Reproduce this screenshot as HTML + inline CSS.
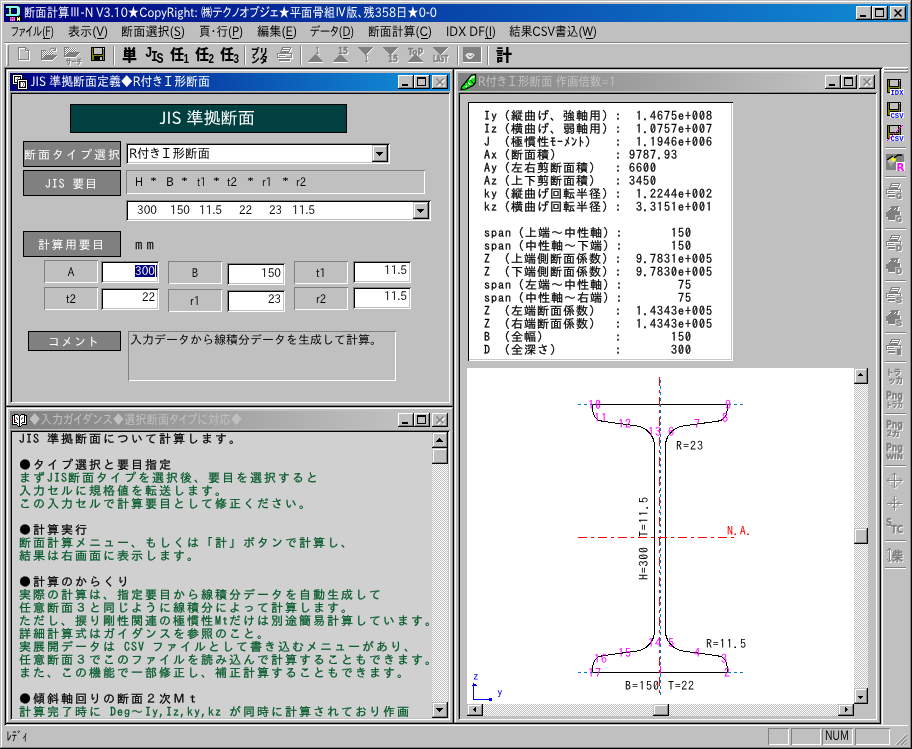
<!DOCTYPE html>
<html lang="ja"><head><meta charset="utf-8"><title>断面計算Ⅲ-N</title>
<style>
html,body{margin:0;padding:0}
body{width:912px;height:749px;background:#c0c0c0;position:relative;overflow:hidden;
 font-family:"IPAPGothic","IPAGothic","Liberation Sans",sans-serif;font-size:12px;color:#000;line-height:1}
div{position:absolute;box-sizing:border-box}
svg{position:absolute;left:0;top:0;overflow:visible}
.frame{background:#c0c0c0;box-shadow:inset -1px -1px 0 #000,inset 1px 1px 0 #c0c0c0,inset -2px -2px 0 #808080,inset 2px 2px 0 #fff}
.sunk{box-shadow:inset 1px 1px 0 #808080,inset -1px -1px 0 #fff,inset 2px 2px 0 #000,inset -2px -2px 0 #c0c0c0}
.btn{background:#c0c0c0;box-shadow:inset -1px -1px 0 #000,inset 1px 1px 0 #fff,inset -2px -2px 0 #808080,inset 2px 2px 0 #c0c0c0}
.sbtn{background:#c0c0c0;box-shadow:inset -1px -1px 0 #000,inset 1px 1px 0 #c0c0c0,inset -2px -2px 0 #808080,inset 2px 2px 0 #fff}
.trk{background:conic-gradient(#fff 25%,#c0c0c0 0 50%,#fff 0 75%,#c0c0c0 0) 0 0/2px 2px}
.ta{background:linear-gradient(to right,#000080,#1084d0 88%)}
.tm{background:linear-gradient(to right,#000080,#1084d0 94%)}
.ti{background:linear-gradient(to right,#808080,#c0c0c0 88%)}
.s1{box-shadow:inset 1px 1px 0 #808080,inset -1px -1px 0 #fff}
.lab{background:#808080;border:1px solid #000;color:#fff}
.mono,svg{will-change:transform}
.mono{-webkit-text-stroke:.25px currentColor}
.mono{font-family:"IPAGothic","Liberation Mono",monospace;font-size:12px;white-space:pre}
.mono div{position:absolute;left:0;height:13px;line-height:13px;white-space:pre}
.gd{letter-spacing:2px}
.tp,.h{letter-spacing:1px}
.g{color:#005828}
text{font-family:"IPAPGothic","IPAGothic","Liberation Sans",sans-serif;font-size:12px}
.m text,text.m{font-family:"IPAGothic","Liberation Mono",monospace;font-size:12px}
</style></head>
<body>
<div class="frame" style="left:0px;top:0px;width:912px;height:749px;"></div>
<div class="tm" style="left:4px;top:4px;width:904px;height:18px;"></div>
<div class="btn" style="left:856px;top:6px;width:16px;height:14px;"></div>
<div style="left:860px;top:15px;width:6px;height:2px;background:#000"></div>
<div class="btn" style="left:872px;top:6px;width:16px;height:14px;"></div>
<div style="left:875px;top:8px;width:9px;height:9px;border:1px solid #000;border-top-width:2px"></div>
<div class="btn" style="left:890px;top:6px;width:16px;height:14px;"></div>
<svg width="16" height="14" style="left:890px;top:6px" shape-rendering="crispEdges"><path d="M4.5 3.5l7 7M11.5 3.5l-7 7" stroke="#000" stroke-width="1.6" fill="none" shape-rendering="auto"/></svg>
<div style="left:43px;top:38px;width:7px;height:1px;background:#000"></div>
<div style="left:97px;top:38px;width:7px;height:1px;background:#000"></div>
<div style="left:174px;top:38px;width:7px;height:1px;background:#000"></div>
<div style="left:232px;top:38px;width:7px;height:1px;background:#000"></div>
<div style="left:286px;top:38px;width:7px;height:1px;background:#000"></div>
<div style="left:343px;top:38px;width:7px;height:1px;background:#000"></div>
<div style="left:421px;top:38px;width:7px;height:1px;background:#000"></div>
<div style="left:485px;top:38px;width:7px;height:1px;background:#000"></div>
<div style="left:586px;top:38px;width:7px;height:1px;background:#000"></div>
<div style="left:4px;top:42px;width:904px;height:1px;background:#808080"></div>
<div style="left:4px;top:43px;width:904px;height:1px;background:#fff"></div>
<div class="sunk" style="left:4px;top:67px;width:879px;height:659px;"></div>
<div class="frame" style="left:6px;top:69px;width:448px;height:338px;"></div>
<div class="ta" style="left:10px;top:73px;width:440px;height:18px;"></div>
<div class="btn" style="left:398px;top:75px;width:16px;height:14px;"></div>
<div style="left:402px;top:84px;width:6px;height:2px;background:#000"></div>
<div class="btn" style="left:414px;top:75px;width:16px;height:14px;"></div>
<div style="left:417px;top:77px;width:9px;height:9px;border:1px solid #000;border-top-width:2px"></div>
<div class="btn" style="left:432px;top:75px;width:16px;height:14px;"></div>
<svg width="16" height="14" style="left:432px;top:75px" shape-rendering="crispEdges"><path d="M5.5 4.5l7 7M12.5 4.5l-7 7" stroke="#fff" stroke-width="1.6" fill="none" shape-rendering="auto"/><path d="M4.5 3.5l7 7M11.5 3.5l-7 7" stroke="#808080" stroke-width="1.6" fill="none" shape-rendering="auto"/></svg>
<div class="sunk" style="left:10px;top:92px;width:440px;height:311px;"></div>
<div style="left:70px;top:104px;width:277px;height:29px;background:#004040;border:1px solid #000"></div>
<div class="frame" style="left:6px;top:407px;width:448px;height:317px;"></div>
<div class="ti" style="left:10px;top:411px;width:440px;height:18px;"></div>
<div class="btn" style="left:398px;top:413px;width:16px;height:14px;"></div>
<div style="left:402px;top:422px;width:6px;height:2px;background:#000"></div>
<div class="btn" style="left:414px;top:413px;width:16px;height:14px;"></div>
<div style="left:417px;top:415px;width:9px;height:9px;border:1px solid #000;border-top-width:2px"></div>
<div class="btn" style="left:432px;top:413px;width:16px;height:14px;"></div>
<svg width="16" height="14" style="left:432px;top:413px" shape-rendering="crispEdges"><path d="M5.5 4.5l7 7M12.5 4.5l-7 7" stroke="#fff" stroke-width="1.6" fill="none" shape-rendering="auto"/><path d="M4.5 3.5l7 7M11.5 3.5l-7 7" stroke="#808080" stroke-width="1.6" fill="none" shape-rendering="auto"/></svg>
<div class="sunk" style="left:10px;top:430px;width:440px;height:290px;"></div>
<div class="frame" style="left:454px;top:69px;width:427px;height:655px;"></div>
<div class="ti" style="left:458px;top:73px;width:419px;height:18px;"></div>
<div class="btn" style="left:825px;top:75px;width:16px;height:14px;"></div>
<div style="left:829px;top:84px;width:6px;height:2px;background:#000"></div>
<div class="btn" style="left:841px;top:75px;width:16px;height:14px;"></div>
<div style="left:844px;top:77px;width:9px;height:9px;border:1px solid #000;border-top-width:2px"></div>
<div class="btn" style="left:859px;top:75px;width:16px;height:14px;"></div>
<svg width="16" height="14" style="left:859px;top:75px" shape-rendering="crispEdges"><path d="M5.5 4.5l7 7M12.5 4.5l-7 7" stroke="#fff" stroke-width="1.6" fill="none" shape-rendering="auto"/><path d="M4.5 3.5l7 7M11.5 3.5l-7 7" stroke="#808080" stroke-width="1.6" fill="none" shape-rendering="auto"/></svg>
<div class="sunk" style="left:458px;top:92px;width:419px;height:628px;"></div>
<div style="left:468px;top:102px;width:265px;height:259px;background:#fff;box-shadow:inset 1px 1px 0 #000,inset -1px -1px 0 #fff,inset -2px -2px 0 #c8c8c8"></div>
<div style="left:467px;top:368px;width:401px;height:348px;background:#fff"></div>
<div class="lab" style="left:23px;top:141px;width:98px;height:26px;"></div>
<div class="lab" style="left:23px;top:170px;width:98px;height:26px;"></div>
<div class="lab" style="left:23px;top:231px;width:98px;height:26px;"></div>
<div class="lab" style="left:28px;top:331px;width:93px;height:20px;"></div>
<div class="sunk" style="left:126px;top:143px;width:264px;height:21px;background:#fff"></div>
<div class="sbtn" style="left:372px;top:145px;width:16px;height:17px;"></div>
<svg width="7" height="4" style="left:376px;top:152px" shape-rendering="crispEdges"><path d="M0 0h7l-3.5 4z" fill="#000"/></svg>
<div class="s1" style="left:126px;top:170px;width:299px;height:24px;"></div>
<div class="sunk" style="left:126px;top:200px;width:305px;height:21px;background:#fff"></div>
<div class="sbtn" style="left:413px;top:202px;width:16px;height:17px;"></div>
<svg width="7" height="4" style="left:417px;top:209px" shape-rendering="crispEdges"><path d="M0 0h7l-3.5 4z" fill="#000"/></svg>
<div class="s1" style="left:44px;top:260px;width:54px;height:23px;"></div>
<div class="sunk" style="left:101px;top:261px;width:58px;height:22px;background:#fff"></div>
<div style="left:135px;top:265px;width:22px;height:12px;background:#000080"></div>
<div style="left:155px;top:265px;width:1px;height:12px;background:#ffff80"></div>
<div class="s1" style="left:168px;top:261px;width:54px;height:23px;"></div>
<div class="sunk" style="left:227px;top:263px;width:58px;height:22px;background:#fff"></div>
<div class="s1" style="left:294px;top:261px;width:54px;height:23px;"></div>
<div class="sunk" style="left:353px;top:261px;width:58px;height:22px;background:#fff"></div>
<div class="s1" style="left:44px;top:287px;width:54px;height:23px;"></div>
<div class="sunk" style="left:101px;top:288px;width:58px;height:22px;background:#fff"></div>
<div class="s1" style="left:168px;top:289px;width:54px;height:23px;"></div>
<div class="sunk" style="left:227px;top:290px;width:58px;height:22px;background:#fff"></div>
<div class="s1" style="left:294px;top:287px;width:54px;height:23px;"></div>
<div class="sunk" style="left:353px;top:287px;width:58px;height:22px;background:#fff"></div>
<div class="s1" style="left:128px;top:331px;width:268px;height:50px;"></div>
<div style="left:12px;top:432px;width:420px;height:286px;background:#d0d0d0;overflow:hidden"><div class="mono gd" style="left:7px;top:0"><div style="top:0px"><span class="h">JIS </span>準拠断面について計算します。</div><div style="top:26px">●タイプ選択と要目指定</div><div class="g" style="top:39px">まず<span class="h">JIS</span>断面タイプを選択後、要目を選択すると</div><div class="g" style="top:52px">入力セルに規格値を転送します。</div><div class="g" style="top:65px">この入力セルで計算要目として修正ください。</div><div style="top:91px">●計算実行</div><div class="g" style="top:104px">断面計算メニュー、もしくは「計」ボタンで計算し、</div><div class="g" style="top:117px">結果は右画面に表示します。</div><div style="top:143px">●計算のからくり</div><div class="g" style="top:156px">実際の計算は、指定要目から線積分データを自動生成して</div><div class="g" style="top:169px">任意断面３と同じように線積分によって計算します。</div><div class="g" style="top:182px">ただし、捩り剛性関連の極慣性<span class="h">Mt</span>だけは別途簡易計算しています。</div><div class="g" style="top:195px">詳細計算式はガイダンスを参照のこと。</div><div class="g" style="top:208px">実展開データは<span class="h"> CSV </span>ファイルとして書き込むメニューがあり、</div><div class="g" style="top:221px">任意断面３でこのファイルを読み込んで計算することもできます。</div><div class="g" style="top:234px">また、この機能で一部修正し、補正計算することもできます。</div><div style="top:260px">●傾斜軸回りの断面２次Ｍｔ</div><div class="g" style="top:273px">計算完了時に<span class="h"> Deg</span>～<span class="h">Iy,Iz,ky,kz </span>が同時に計算されており作画</div></div></div>
<div class="trk" style="left:432px;top:432px;width:16px;height:286px;"></div>
<div class="sbtn" style="left:432px;top:432px;width:16px;height:16px;"></div>
<svg width="7" height="4" style="left:436px;top:438px" shape-rendering="crispEdges"><path d="M0 4h7l-3.5-4z" fill="#000"/></svg>
<div class="sbtn" style="left:432px;top:448px;width:16px;height:16px;"></div>
<div class="sbtn" style="left:432px;top:702px;width:16px;height:16px;"></div>
<svg width="7" height="4" style="left:436px;top:708px" shape-rendering="crispEdges"><path d="M0 0h7l-3.5 4z" fill="#000"/></svg>
<div style="left:468px;top:109px;width:264px;height:250px;"><div class="mono tp" style="left:0;top:0"><div style="top:0px;left:16px"><span class="h">Iy</span>（縦曲げ、強軸用）<span class="h">:</span></div><div style="top:0px;left:168px"><span class="h">1.4675e+008</span></div><div style="top:13px;left:16px"><span class="h">Iz</span>（横曲げ、弱軸用）<span class="h">:</span></div><div style="top:13px;left:168px"><span class="h">1.0757e+007</span></div><div style="top:26px;left:16px"><span class="h">J </span>（極慣性<span class="h">ﾓｰﾒﾝﾄ</span>）</div><div style="top:26px;left:147px"><span class="h">:</span></div><div style="top:26px;left:168px"><span class="h">1.1946e+006</span></div><div style="top:39px;left:16px"><span class="h">Ax</span>（断面積）</div><div style="top:39px;left:147px"><span class="h">:</span></div><div style="top:39px;left:161px"><span class="h">9787.93</span></div><div style="top:52px;left:16px"><span class="h">Ay</span>（左右剪断面積）</div><div style="top:52px;left:147px"><span class="h">:</span></div><div style="top:52px;left:161px"><span class="h">6600</span></div><div style="top:65px;left:16px"><span class="h">Az</span>（上下剪断面積）</div><div style="top:65px;left:147px"><span class="h">:</span></div><div style="top:65px;left:161px"><span class="h">3450</span></div><div style="top:78px;left:16px"><span class="h">ky</span>（縦曲げ回転半径）<span class="h">:</span></div><div style="top:78px;left:168px"><span class="h">1.2244e+002</span></div><div style="top:91px;left:16px"><span class="h">kz</span>（横曲げ回転半径）<span class="h">:</span></div><div style="top:91px;left:168px"><span class="h">3.3151e+001</span></div><div style="top:117px;left:16px"><span class="h">span</span>（上端～中性軸）<span class="h">:</span></div><div style="top:117px;left:203px"><span class="h">150</span></div><div style="top:130px;left:16px"><span class="h">span</span>（中性軸～下端）<span class="h">:</span></div><div style="top:130px;left:203px"><span class="h">150</span></div><div style="top:143px;left:16px"><span class="h">Z </span>（上端側断面係数）<span class="h">:</span></div><div style="top:143px;left:168px"><span class="h">9.7831e+005</span></div><div style="top:156px;left:16px"><span class="h">Z </span>（下端側断面係数）<span class="h">:</span></div><div style="top:156px;left:168px"><span class="h">9.7830e+005</span></div><div style="top:169px;left:16px"><span class="h">span</span>（左端～中性軸）<span class="h">:</span></div><div style="top:169px;left:210px"><span class="h">75</span></div><div style="top:182px;left:16px"><span class="h">span</span>（中性軸～右端）<span class="h">:</span></div><div style="top:182px;left:210px"><span class="h">75</span></div><div style="top:195px;left:16px"><span class="h">Z </span>（左端断面係数）</div><div style="top:195px;left:147px"><span class="h">:</span></div><div style="top:195px;left:168px"><span class="h">1.4343e+005</span></div><div style="top:208px;left:16px"><span class="h">Z </span>（右端断面係数）</div><div style="top:208px;left:147px"><span class="h">:</span></div><div style="top:208px;left:168px"><span class="h">1.4343e+005</span></div><div style="top:221px;left:16px"><span class="h">B </span>（全幅）</div><div style="top:221px;left:147px"><span class="h">:</span></div><div style="top:221px;left:203px"><span class="h">150</span></div><div style="top:234px;left:16px"><span class="h">D </span>（全深さ）</div><div style="top:234px;left:147px"><span class="h">:</span></div><div style="top:234px;left:203px"><span class="h">300</span></div></div></div>
<div class="trk" style="left:854px;top:368px;width:14px;height:336px;"></div>
<div class="sbtn" style="left:854px;top:368px;width:14px;height:16px;"></div>
<svg width="5" height="3" style="left:858px;top:373px" shape-rendering="crispEdges"><path d="M0 3h5l-2.5-3z" fill="#000"/></svg>
<div class="sbtn" style="left:854px;top:528px;width:14px;height:16px;"></div>
<div class="sbtn" style="left:854px;top:688px;width:14px;height:16px;"></div>
<svg width="5" height="3" style="left:858px;top:696px" shape-rendering="crispEdges"><path d="M0 0h5l-2.5 3z" fill="#000"/></svg>
<div class="trk" style="left:467px;top:704px;width:387px;height:12px;"></div>
<div class="sbtn" style="left:467px;top:704px;width:16px;height:12px;"></div>
<svg width="3" height="5" style="left:473px;top:707px" shape-rendering="crispEdges"><path d="M3 0v5l-3-2.5z" fill="#000"/></svg>
<div class="sbtn" style="left:653px;top:704px;width:16px;height:12px;"></div>
<div class="sbtn" style="left:838px;top:704px;width:16px;height:12px;"></div>
<svg width="3" height="5" style="left:845px;top:707px" shape-rendering="crispEdges"><path d="M0 0v5l3-2.5z" fill="#000"/></svg>
<div style="left:854px;top:704px;width:14px;height:12px;background:#c0c0c0"></div>
<div style="left:6px;top:44px;width:3px;height:22px;box-shadow:inset 1px 1px 0 #fff,inset -1px -1px 0 #808080"></div>
<div style="left:113px;top:46px;width:1px;height:19px;background:#808080"></div>
<div style="left:114px;top:46px;width:1px;height:19px;background:#fff"></div>
<div style="left:244px;top:46px;width:1px;height:19px;background:#808080"></div>
<div style="left:245px;top:46px;width:1px;height:19px;background:#fff"></div>
<div style="left:300px;top:46px;width:1px;height:19px;background:#808080"></div>
<div style="left:301px;top:46px;width:1px;height:19px;background:#fff"></div>
<div style="left:457px;top:46px;width:1px;height:19px;background:#808080"></div>
<div style="left:458px;top:46px;width:1px;height:19px;background:#fff"></div>
<div style="left:487px;top:46px;width:1px;height:19px;background:#808080"></div>
<div style="left:488px;top:46px;width:1px;height:19px;background:#fff"></div>
<div style="left:883px;top:67px;width:25px;height:3px;box-shadow:inset 1px 1px 0 #fff,inset -1px -1px 0 #808080"></div>
<div style="left:883px;top:70px;width:25px;height:3px;box-shadow:inset 1px 1px 0 #fff,inset -1px -1px 0 #808080"></div>
<div style="left:885px;top:147px;width:21px;height:1px;background:#808080"></div>
<div style="left:885px;top:148px;width:21px;height:1px;background:#fff"></div>
<div style="left:885px;top:176px;width:21px;height:1px;background:#808080"></div>
<div style="left:885px;top:177px;width:21px;height:1px;background:#fff"></div>
<div style="left:885px;top:228px;width:21px;height:1px;background:#808080"></div>
<div style="left:885px;top:229px;width:21px;height:1px;background:#fff"></div>
<div style="left:885px;top:280px;width:21px;height:1px;background:#808080"></div>
<div style="left:885px;top:281px;width:21px;height:1px;background:#fff"></div>
<div style="left:885px;top:332px;width:21px;height:1px;background:#808080"></div>
<div style="left:885px;top:333px;width:21px;height:1px;background:#fff"></div>
<div style="left:885px;top:361px;width:21px;height:1px;background:#808080"></div>
<div style="left:885px;top:362px;width:21px;height:1px;background:#fff"></div>
<div style="left:885px;top:413px;width:21px;height:1px;background:#808080"></div>
<div style="left:885px;top:414px;width:21px;height:1px;background:#fff"></div>
<div style="left:885px;top:465px;width:21px;height:1px;background:#808080"></div>
<div style="left:885px;top:466px;width:21px;height:1px;background:#fff"></div>
<div style="left:885px;top:540px;width:21px;height:1px;background:#808080"></div>
<div style="left:885px;top:541px;width:21px;height:1px;background:#fff"></div>
<div style="left:885px;top:567px;width:21px;height:1px;background:#808080"></div>
<div style="left:885px;top:568px;width:21px;height:1px;background:#fff"></div>
<div style="left:883px;top:725px;width:25px;height:1px;background:#fff"></div>
<div class="s1" style="left:768px;top:728px;width:21px;height:17px;"></div>
<div class="s1" style="left:791px;top:728px;width:30px;height:17px;"></div>
<div class="s1" style="left:822px;top:728px;width:31px;height:17px;"></div>
<div class="s1" style="left:855px;top:728px;width:35px;height:17px;"></div>
<svg width="912" height="749" style="pointer-events:none">
<defs><pattern id="dz" width="2" height="2" patternUnits="userSpaceOnUse"><rect width="2" height="2" fill="#fff"/><rect width="1" height="1" fill="#808080"/><rect x="1" y="1" width="1" height="1" fill="#808080"/></pattern></defs>
<g transform="translate(18 47)" shape-rendering="crispEdges"><path d="M0.5 0.5H7.5L10.5 3.5V12.5H0.5ZM7.5 0.5V3.5H10.5" fill="none" stroke="#fff" stroke-width="1" transform="translate(1 1)"/><path d="M0.5 0.5H7.5L10.5 3.5V12.5H0.5ZM7.5 0.5V3.5H10.5" fill="none" stroke="#808080" stroke-width="1"/></g>
<g transform="translate(41 47)" shape-rendering="crispEdges"><path d="M1 13.5H11.5L15.5 9.5" fill="none" stroke="#fff"/><rect x="0" y="4" width="12" height="9" fill="url(#dz)"/><path d="M0 3h5v1h-5z" fill="#808080"/><path d="M1 13L5 8H16L12 13Z" fill="#808080"/><path d="M0.5 3.5V12.5" stroke="#808080" fill="none"/><path shape-rendering="auto" d="M8.5 3.5C9 0.5 13 0.5 14.5 3.5M14.5 0.5V3.5H11.5" fill="none" stroke="#fff" stroke-width="1" transform="translate(1 1)"/><path shape-rendering="auto" d="M8.5 3.5C9 0.5 13 0.5 14.5 3.5M14.5 0.5V3.5H11.5" fill="none" stroke="#808080" stroke-width="1"/></g>
<g transform="translate(64 44)" shape-rendering="crispEdges"><path d="M1 13.5H11.5L15.5 9.5" fill="none" stroke="#fff"/><rect x="0" y="4" width="12" height="9" fill="url(#dz)"/><path d="M0 3h5v1h-5z" fill="#808080"/><path d="M1 13L5 8H16L12 13Z" fill="#808080"/><path d="M0.5 3.5V12.5" stroke="#808080" fill="none"/><text x="3" y="21" font-weight="bold" style="font-family:'Noto Sans CJK JP','IPAGothic',sans-serif;font-size:7px" fill="#fff" textLength="16" lengthAdjust="spacingAndGlyphs">サーチ</text><text x="2" y="20" font-weight="bold" style="font-family:'Noto Sans CJK JP','IPAGothic',sans-serif;font-size:7px" fill="#808080" textLength="16" lengthAdjust="spacingAndGlyphs" stroke="#808080" stroke-width=".35">サーチ</text></g>
<g transform="translate(91 47)" shape-rendering="crispEdges"><rect x="0" y="0" width="14" height="14" fill="#000"/><rect x="1" y="1" width="12" height="12" fill="#808000"/><rect x="3" y="1" width="8" height="6" fill="#c0c0c0"/><path d="M2.5 1V7.5H11.5V1" fill="none" stroke="#000"/><rect x="3" y="9" width="9" height="5" fill="#000"/><rect x="9" y="10" width="2" height="3" fill="#c0c0c0"/><rect x="12" y="1" width="1" height="1" fill="#fff"/></g>
<g transform="translate(0 0)"><text x="122" y="60.5" font-weight="900" style="font-family:'Noto Sans CJK JP','IPAGothic',sans-serif;font-size:16px" fill="#000" textLength="15" lengthAdjust="spacingAndGlyphs">単</text></g>
<g transform="translate(0 0)"><text x="145" y="56.5" font-weight="bold" style="font-family:'Liberation Mono',monospace;font-size:15px" fill="#000" textLength="7.5" lengthAdjust="spacingAndGlyphs">J</text><text x="151" y="61" font-weight="bold" style="font-family:'Liberation Mono',monospace;font-size:14px" fill="#000" textLength="7" lengthAdjust="spacingAndGlyphs">I</text><text x="156.5" y="62.5" font-weight="bold" style="font-family:'Liberation Mono',monospace;font-size:15px" fill="#000" textLength="7" lengthAdjust="spacingAndGlyphs">S</text></g>
<g transform="translate(0 0)"><text x="170" y="59" font-weight="900" style="font-family:'Noto Sans CJK JP','IPAGothic',sans-serif;font-size:14px" fill="#000" textLength="14" lengthAdjust="spacingAndGlyphs">任</text><text x="183.5" y="63" font-weight="bold" style="font-family:'Liberation Sans',sans-serif;font-size:12px" fill="#000" textLength="5.5" lengthAdjust="spacingAndGlyphs">1</text></g>
<g transform="translate(0 0)"><text x="195" y="59" font-weight="900" style="font-family:'Noto Sans CJK JP','IPAGothic',sans-serif;font-size:14px" fill="#000" textLength="14" lengthAdjust="spacingAndGlyphs">任</text><text x="208.5" y="63" font-weight="bold" style="font-family:'Liberation Sans',sans-serif;font-size:12px" fill="#000" textLength="5.5" lengthAdjust="spacingAndGlyphs">2</text></g>
<g transform="translate(0 0)"><text x="220" y="59" font-weight="900" style="font-family:'Noto Sans CJK JP','IPAGothic',sans-serif;font-size:14px" fill="#000" textLength="14" lengthAdjust="spacingAndGlyphs">任</text><text x="233.5" y="63" font-weight="bold" style="font-family:'Liberation Sans',sans-serif;font-size:12px" fill="#000" textLength="5.5" lengthAdjust="spacingAndGlyphs">3</text></g>
<g transform="translate(0 0)"><text x="251" y="54.5" font-weight="900" style="font-family:'Noto Sans CJK JP','IPAGothic',sans-serif;font-size:9px" fill="#000" textLength="17" lengthAdjust="spacingAndGlyphs">プリ</text><text x="251" y="62.5" font-weight="900" style="font-family:'Noto Sans CJK JP','IPAGothic',sans-serif;font-size:9px" fill="#000" textLength="17" lengthAdjust="spacingAndGlyphs">ンタ</text></g>
<g transform="translate(277 47)" shape-rendering="crispEdges"><path d="M5.5 0.5H13.5L11.5 5.5H3.5ZM5 2.5H12M4.5 4H11M0.5 6.5H14.5V10.5H0.5ZM2 8.5H8M2.5 11.5V13.5H12.5V11.5M3 12.5H12" fill="none" stroke="#fff" stroke-width="1" transform="translate(1 1)"/><path d="M5.5 0.5H13.5L11.5 5.5H3.5ZM5 2.5H12M4.5 4H11M0.5 6.5H14.5V10.5H0.5ZM2 8.5H8M2.5 11.5V13.5H12.5V11.5M3 12.5H12" fill="none" stroke="#808080" stroke-width="1"/></g>
<g transform="translate(0 0)" shape-rendering="crispEdges"><path d="M308 62H323" stroke="#fff" fill="none" transform="translate(0 0.5)"/><path d="M308 62L315.5 54L323 62Z" fill="#808080"/><text x="317" y="55" font-weight="bold" style="font-family:'DejaVu Sans','Liberation Sans',sans-serif;font-size:9px" fill="#fff" textLength="3" lengthAdjust="spacingAndGlyphs">1</text><text x="316" y="54" font-weight="bold" style="font-family:'DejaVu Sans','Liberation Sans',sans-serif;font-size:9px" fill="#808080" textLength="3" lengthAdjust="spacingAndGlyphs" stroke="#808080" stroke-width=".35">1</text></g>
<g transform="translate(0 0)" shape-rendering="crispEdges"><path d="M333 62H348" stroke="#fff" fill="none" transform="translate(0 0.5)"/><path d="M333 62L340.5 54L348 62Z" fill="#808080"/><text x="339" y="55" font-weight="bold" style="font-family:'DejaVu Sans','Liberation Sans',sans-serif;font-size:9px" fill="#fff" textLength="10" lengthAdjust="spacingAndGlyphs">15</text><text x="338" y="54" font-weight="bold" style="font-family:'DejaVu Sans','Liberation Sans',sans-serif;font-size:9px" fill="#808080" textLength="10" lengthAdjust="spacingAndGlyphs" stroke="#808080" stroke-width=".35">15</text></g>
<g transform="translate(0 0)" shape-rendering="crispEdges"><path d="M366.5 55L373.5 47.5" stroke="#fff" fill="none" shape-rendering="auto"/><path d="M358 47H373L365.5 55Z" fill="#808080"/><text x="366" y="63" font-weight="bold" style="font-family:'DejaVu Sans','Liberation Sans',sans-serif;font-size:9px" fill="#fff" textLength="3" lengthAdjust="spacingAndGlyphs">1</text><text x="365" y="62" font-weight="bold" style="font-family:'DejaVu Sans','Liberation Sans',sans-serif;font-size:9px" fill="#808080" textLength="3" lengthAdjust="spacingAndGlyphs" stroke="#808080" stroke-width=".35">1</text></g>
<g transform="translate(0 0)" shape-rendering="crispEdges"><path d="M391.5 55L398.5 47.5" stroke="#fff" fill="none" shape-rendering="auto"/><path d="M383 47H398L390.5 55Z" fill="#808080"/><text x="389" y="63" font-weight="bold" style="font-family:'DejaVu Sans','Liberation Sans',sans-serif;font-size:9px" fill="#fff" textLength="10" lengthAdjust="spacingAndGlyphs">15</text><text x="388" y="62" font-weight="bold" style="font-family:'DejaVu Sans','Liberation Sans',sans-serif;font-size:9px" fill="#808080" textLength="10" lengthAdjust="spacingAndGlyphs" stroke="#808080" stroke-width=".35">15</text></g>
<g transform="translate(0 0)" shape-rendering="crispEdges"><text x="409" y="56" font-weight="bold" style="font-family:'DejaVu Sans','Liberation Sans',sans-serif;font-size:9px" fill="#fff" textLength="15" lengthAdjust="spacingAndGlyphs">ToP</text><text x="408" y="55" font-weight="bold" style="font-family:'DejaVu Sans','Liberation Sans',sans-serif;font-size:9px" fill="#808080" textLength="15" lengthAdjust="spacingAndGlyphs" stroke="#808080" stroke-width=".35">ToP</text><path d="M408 62H423" stroke="#fff" fill="none" transform="translate(0 0.5)"/><path d="M408 62L415.5 54L423 62Z" fill="#808080"/></g>
<g transform="translate(0 0)" shape-rendering="crispEdges"><path d="M441.5 55L448.5 47.5" stroke="#fff" fill="none" shape-rendering="auto"/><path d="M433 47H448L440.5 55Z" fill="#808080"/><text x="434" y="63" font-weight="bold" style="font-family:'DejaVu Sans','Liberation Sans',sans-serif;font-size:8px" fill="#fff" textLength="15" lengthAdjust="spacingAndGlyphs">LAST</text><text x="433" y="62" font-weight="bold" style="font-family:'DejaVu Sans','Liberation Sans',sans-serif;font-size:8px" fill="#808080" textLength="15" lengthAdjust="spacingAndGlyphs" stroke="#808080" stroke-width=".35">LAST</text></g>
<g transform="translate(463 47)" shape-rendering="crispEdges"><rect x="0" y="0" width="19" height="16" fill="#fff"/><rect x="0" y="0" width="18" height="15" fill="#808080"/><path d="M2 8L5 6H9L12 8L8 12H5Z" fill="#e0e0e0" shape-rendering="auto"/><path d="M5 8L7 10L10 8" stroke="#808080" fill="none" shape-rendering="auto"/></g>
<g transform="translate(0 0)"><text x="496" y="60.5" font-weight="900" style="font-family:'Noto Sans CJK JP','IPAGothic',sans-serif;font-size:16px" fill="#000" textLength="16" lengthAdjust="spacingAndGlyphs">計</text></g>
<g transform="translate(887 79)" shape-rendering="crispEdges"><rect x="0" y="0" width="14" height="14" fill="#000"/><rect x="1" y="1" width="12" height="12" fill="#808000"/><rect x="3" y="1" width="8" height="6" fill="#c0c0c0"/><path d="M2.5 1V7.5H11.5V1" fill="none" stroke="#000"/><rect x="3" y="9" width="9" height="5" fill="#000"/><rect x="9" y="10" width="2" height="3" fill="#c0c0c0"/><rect x="12" y="1" width="1" height="1" fill="#fff"/><rect x="3" y="10" width="14" height="6" fill="#fff"/><text x="3.5" y="16" font-weight="bold" style="font-family:'Liberation Mono',monospace;font-size:8px" fill="#00f" textLength="13" lengthAdjust="spacingAndGlyphs">IDX</text></g>
<g transform="translate(887 102)" shape-rendering="crispEdges"><rect x="0" y="0" width="14" height="14" fill="#000"/><rect x="1" y="1" width="12" height="12" fill="#808000"/><rect x="3" y="1" width="8" height="6" fill="#c0c0c0"/><path d="M2.5 1V7.5H11.5V1" fill="none" stroke="#000"/><rect x="3" y="9" width="9" height="5" fill="#000"/><rect x="9" y="10" width="2" height="3" fill="#c0c0c0"/><rect x="12" y="1" width="1" height="1" fill="#fff"/><rect x="3" y="10" width="14" height="6" fill="#fff"/><text x="3.5" y="16" font-weight="bold" style="font-family:'Liberation Mono',monospace;font-size:8px" fill="#00f" textLength="13" lengthAdjust="spacingAndGlyphs">CSV</text></g>
<g transform="translate(887 125)" shape-rendering="crispEdges"><rect x="0" y="0" width="14" height="14" fill="#000"/><rect x="1" y="1" width="12" height="12" fill="#808000"/><rect x="3" y="1" width="8" height="6" fill="#c0c0c0"/><path d="M2.5 1V7.5H11.5V1" fill="none" stroke="#000"/><rect x="3" y="9" width="9" height="5" fill="#000"/><rect x="9" y="10" width="2" height="3" fill="#c0c0c0"/><rect x="12" y="1" width="1" height="1" fill="#fff"/><rect x="3" y="10" width="14" height="6" fill="#fff"/><text x="3.5" y="16" font-weight="bold" style="font-family:'Liberation Mono',monospace;font-size:8px" fill="#00f" textLength="13" lengthAdjust="spacingAndGlyphs">CSV</text><path d="M0 16L16 0" stroke="#f0f" fill="none" shape-rendering="auto"/></g>
<g transform="translate(886 154)" shape-rendering="crispEdges"><rect x="0" y="0" width="18" height="16" fill="#808080"/><path d="M1 6L7 2L10 7L4 11Z" fill="#c0c0c0" shape-rendering="auto"/><path d="M2 8L5 13L8 9Z" fill="#a0a0a0" shape-rendering="auto"/><path d="M5 4L9 3L10 6L7 8Z" fill="#ff0" shape-rendering="auto"/><path d="M1 6L7 2M8 4L12 1H16" stroke="#000" stroke-width="1.3" fill="none" shape-rendering="auto"/><rect x="10" y="8" width="9" height="9" fill="#fff"/><text x="10.5" y="16.5" font-weight="bold" style="font-family:'DejaVu Sans','Liberation Sans',sans-serif;font-size:10px" fill="#f0f" textLength="8" lengthAdjust="spacingAndGlyphs">R</text></g>
<g transform="translate(886 183)" shape-rendering="crispEdges"><path d="M5.5 0.5H13.5L11.5 5.5H3.5ZM5 2.5H12M4.5 4H11M0.5 6.5H14.5V10.5H0.5ZM2 8.5H8M2.5 11.5V13.5H12.5V11.5M3 12.5H12" fill="none" stroke="#fff" stroke-width="1" transform="translate(1 1)"/><path d="M5.5 0.5H13.5L11.5 5.5H3.5ZM5 2.5H12M4.5 4H11M0.5 6.5H14.5V10.5H0.5ZM2 8.5H8M2.5 11.5V13.5H12.5V11.5M3 12.5H12" fill="none" stroke="#808080" stroke-width="1"/><rect x="9" y="9" width="8" height="8" fill="#c0c0c0"/><text x="11" y="17" font-weight="bold" style="font-family:'Liberation Sans','Noto Sans CJK JP',sans-serif;font-size:9px" fill="#fff" textLength="6" lengthAdjust="spacingAndGlyphs">G</text><text x="10" y="16" font-weight="bold" style="font-family:'Liberation Sans','Noto Sans CJK JP',sans-serif;font-size:9px" fill="#808080" textLength="6" lengthAdjust="spacingAndGlyphs" stroke="#808080" stroke-width=".35">G</text></g>
<g transform="translate(886 206)" shape-rendering="crispEdges"><path d="M5 0H13L11 5H14V11H12V14H2V11H0V6L3 5Z" fill="#fff" transform="translate(1 1)"/><path d="M5 0H13L11 5H14V11H12V14H2V11H0V6L3 5Z" fill="#808080"/><rect x="4" y="2" width="1" height="1" fill="#fff"/><rect x="9" y="2" width="1" height="1" fill="#fff"/><rect x="3" y="3" width="1" height="1" fill="#fff"/><rect x="8" y="3" width="1" height="1" fill="#fff"/><rect x="9" y="9" width="8" height="8" fill="#c0c0c0"/><text x="11" y="17" font-weight="bold" style="font-family:'Liberation Sans','Noto Sans CJK JP',sans-serif;font-size:9px" fill="#fff" textLength="6" lengthAdjust="spacingAndGlyphs">G</text><text x="10" y="16" font-weight="bold" style="font-family:'Liberation Sans','Noto Sans CJK JP',sans-serif;font-size:9px" fill="#808080" textLength="6" lengthAdjust="spacingAndGlyphs" stroke="#808080" stroke-width=".35">G</text></g>
<g transform="translate(886 235)" shape-rendering="crispEdges"><path d="M5.5 0.5H13.5L11.5 5.5H3.5ZM5 2.5H12M4.5 4H11M0.5 6.5H14.5V10.5H0.5ZM2 8.5H8M2.5 11.5V13.5H12.5V11.5M3 12.5H12" fill="none" stroke="#fff" stroke-width="1" transform="translate(1 1)"/><path d="M5.5 0.5H13.5L11.5 5.5H3.5ZM5 2.5H12M4.5 4H11M0.5 6.5H14.5V10.5H0.5ZM2 8.5H8M2.5 11.5V13.5H12.5V11.5M3 12.5H12" fill="none" stroke="#808080" stroke-width="1"/><rect x="9" y="9" width="8" height="8" fill="#c0c0c0"/><text x="11" y="17" font-weight="bold" style="font-family:'Liberation Sans','Noto Sans CJK JP',sans-serif;font-size:9px" fill="#fff" textLength="6" lengthAdjust="spacingAndGlyphs">D</text><text x="10" y="16" font-weight="bold" style="font-family:'Liberation Sans','Noto Sans CJK JP',sans-serif;font-size:9px" fill="#808080" textLength="6" lengthAdjust="spacingAndGlyphs" stroke="#808080" stroke-width=".35">D</text></g>
<g transform="translate(886 258)" shape-rendering="crispEdges"><path d="M5 0H13L11 5H14V11H12V14H2V11H0V6L3 5Z" fill="#fff" transform="translate(1 1)"/><path d="M5 0H13L11 5H14V11H12V14H2V11H0V6L3 5Z" fill="#808080"/><rect x="4" y="2" width="1" height="1" fill="#fff"/><rect x="9" y="2" width="1" height="1" fill="#fff"/><rect x="3" y="3" width="1" height="1" fill="#fff"/><rect x="8" y="3" width="1" height="1" fill="#fff"/><rect x="9" y="9" width="8" height="8" fill="#c0c0c0"/><text x="11" y="17" font-weight="bold" style="font-family:'Liberation Sans','Noto Sans CJK JP',sans-serif;font-size:9px" fill="#fff" textLength="6" lengthAdjust="spacingAndGlyphs">D</text><text x="10" y="16" font-weight="bold" style="font-family:'Liberation Sans','Noto Sans CJK JP',sans-serif;font-size:9px" fill="#808080" textLength="6" lengthAdjust="spacingAndGlyphs" stroke="#808080" stroke-width=".35">D</text></g>
<g transform="translate(886 287)" shape-rendering="crispEdges"><path d="M5.5 0.5H13.5L11.5 5.5H3.5ZM5 2.5H12M4.5 4H11M0.5 6.5H14.5V10.5H0.5ZM2 8.5H8M2.5 11.5V13.5H12.5V11.5M3 12.5H12" fill="none" stroke="#fff" stroke-width="1" transform="translate(1 1)"/><path d="M5.5 0.5H13.5L11.5 5.5H3.5ZM5 2.5H12M4.5 4H11M0.5 6.5H14.5V10.5H0.5ZM2 8.5H8M2.5 11.5V13.5H12.5V11.5M3 12.5H12" fill="none" stroke="#808080" stroke-width="1"/><rect x="9" y="9" width="8" height="8" fill="#c0c0c0"/><text x="11" y="17" font-weight="bold" style="font-family:'Liberation Sans','Noto Sans CJK JP',sans-serif;font-size:9px" fill="#fff" textLength="6" lengthAdjust="spacingAndGlyphs">S</text><text x="10" y="16" font-weight="bold" style="font-family:'Liberation Sans','Noto Sans CJK JP',sans-serif;font-size:9px" fill="#808080" textLength="6" lengthAdjust="spacingAndGlyphs" stroke="#808080" stroke-width=".35">S</text></g>
<g transform="translate(886 310)" shape-rendering="crispEdges"><path d="M5 0H13L11 5H14V11H12V14H2V11H0V6L3 5Z" fill="#fff" transform="translate(1 1)"/><path d="M5 0H13L11 5H14V11H12V14H2V11H0V6L3 5Z" fill="#808080"/><rect x="4" y="2" width="1" height="1" fill="#fff"/><rect x="9" y="2" width="1" height="1" fill="#fff"/><rect x="3" y="3" width="1" height="1" fill="#fff"/><rect x="8" y="3" width="1" height="1" fill="#fff"/><rect x="9" y="9" width="8" height="8" fill="#c0c0c0"/><text x="11" y="17" font-weight="bold" style="font-family:'Liberation Sans','Noto Sans CJK JP',sans-serif;font-size:9px" fill="#fff" textLength="6" lengthAdjust="spacingAndGlyphs">S</text><text x="10" y="16" font-weight="bold" style="font-family:'Liberation Sans','Noto Sans CJK JP',sans-serif;font-size:9px" fill="#808080" textLength="6" lengthAdjust="spacingAndGlyphs" stroke="#808080" stroke-width=".35">S</text></g>
<g transform="translate(886 339)" shape-rendering="crispEdges"><path d="M5.5 0.5H13.5L11.5 5.5H3.5ZM5 2.5H12M4.5 4H11M0.5 6.5H14.5V10.5H0.5ZM2 8.5H8M2.5 11.5V13.5H12.5V11.5M3 12.5H12" fill="none" stroke="#fff" stroke-width="1" transform="translate(1 1)"/><path d="M5.5 0.5H13.5L11.5 5.5H3.5ZM5 2.5H12M4.5 4H11M0.5 6.5H14.5V10.5H0.5ZM2 8.5H8M2.5 11.5V13.5H12.5V11.5M3 12.5H12" fill="none" stroke="#808080" stroke-width="1"/><rect x="9" y="9" width="8" height="8" fill="#c0c0c0"/><text x="11" y="17" font-weight="bold" style="font-family:'Liberation Sans','Noto Sans CJK JP',sans-serif;font-size:9px" fill="#fff" textLength="6" lengthAdjust="spacingAndGlyphs">I</text><text x="10" y="16" font-weight="bold" style="font-family:'Liberation Sans','Noto Sans CJK JP',sans-serif;font-size:9px" fill="#808080" textLength="6" lengthAdjust="spacingAndGlyphs" stroke="#808080" stroke-width=".35">I</text></g>
<g transform="translate(886 368)" shape-rendering="crispEdges"><text x="1" y="8" font-weight="bold" style="font-family:'Noto Sans CJK JP','IPAGothic',sans-serif;font-size:8px" fill="#fff" textLength="15" lengthAdjust="spacingAndGlyphs">トラ</text><text x="0" y="7" font-weight="bold" style="font-family:'Noto Sans CJK JP','IPAGothic',sans-serif;font-size:8px" fill="#808080" textLength="15" lengthAdjust="spacingAndGlyphs" stroke="#808080" stroke-width=".35">トラ</text><text x="3" y="16" font-weight="bold" style="font-family:'Noto Sans CJK JP','IPAGothic',sans-serif;font-size:8px" fill="#fff" textLength="15" lengthAdjust="spacingAndGlyphs">ッカ</text><text x="2" y="15" font-weight="bold" style="font-family:'Noto Sans CJK JP','IPAGothic',sans-serif;font-size:8px" fill="#808080" textLength="15" lengthAdjust="spacingAndGlyphs" stroke="#808080" stroke-width=".35">ッカ</text></g>
<g transform="translate(886 391)" shape-rendering="crispEdges"><text x="1" y="9" font-weight="bold" style="font-family:'DejaVu Sans','Liberation Sans',sans-serif;font-size:10px" fill="#fff" textLength="17" lengthAdjust="spacingAndGlyphs">Png</text><text x="0" y="8" font-weight="bold" style="font-family:'DejaVu Sans','Liberation Sans',sans-serif;font-size:10px" fill="#808080" textLength="17" lengthAdjust="spacingAndGlyphs" stroke="#808080" stroke-width=".35">Png</text><text x="1" y="17" font-weight="bold" style="font-family:'Noto Sans CJK JP','IPAGothic',sans-serif;font-size:7px" fill="#fff" textLength="17" lengthAdjust="spacingAndGlyphs">トラカ</text><text x="0" y="16" font-weight="bold" style="font-family:'Noto Sans CJK JP','IPAGothic',sans-serif;font-size:7px" fill="#808080" textLength="17" lengthAdjust="spacingAndGlyphs" stroke="#808080" stroke-width=".35">トラカ</text></g>
<g transform="translate(886 420)" shape-rendering="crispEdges"><text x="1" y="9" font-weight="bold" style="font-family:'DejaVu Sans','Liberation Sans',sans-serif;font-size:10px" fill="#fff" textLength="17" lengthAdjust="spacingAndGlyphs">Png</text><text x="0" y="8" font-weight="bold" style="font-family:'DejaVu Sans','Liberation Sans',sans-serif;font-size:10px" fill="#808080" textLength="17" lengthAdjust="spacingAndGlyphs" stroke="#808080" stroke-width=".35">Png</text><text x="2" y="17" font-weight="bold" style="font-family:'Noto Sans CJK JP','IPAGothic',sans-serif;font-size:7px" fill="#fff" textLength="13" lengthAdjust="spacingAndGlyphs">2カ</text><text x="1" y="16" font-weight="bold" style="font-family:'Noto Sans CJK JP','IPAGothic',sans-serif;font-size:7px" fill="#808080" textLength="13" lengthAdjust="spacingAndGlyphs" stroke="#808080" stroke-width=".35">2カ</text></g>
<g transform="translate(886 443)" shape-rendering="crispEdges"><text x="1" y="9" font-weight="bold" style="font-family:'DejaVu Sans','Liberation Sans',sans-serif;font-size:10px" fill="#fff" textLength="17" lengthAdjust="spacingAndGlyphs">Png</text><text x="0" y="8" font-weight="bold" style="font-family:'DejaVu Sans','Liberation Sans',sans-serif;font-size:10px" fill="#808080" textLength="17" lengthAdjust="spacingAndGlyphs" stroke="#808080" stroke-width=".35">Png</text><text x="1" y="17" font-weight="bold" style="font-family:'DejaVu Sans','Liberation Sans',sans-serif;font-size:7px" fill="#fff" textLength="17" lengthAdjust="spacingAndGlyphs">WIN</text><text x="0" y="16" font-weight="bold" style="font-family:'DejaVu Sans','Liberation Sans',sans-serif;font-size:7px" fill="#808080" textLength="17" lengthAdjust="spacingAndGlyphs" stroke="#808080" stroke-width=".35">WIN</text></g>
<g transform="translate(886 472)" shape-rendering="crispEdges"><path shape-rendering="auto" d="M8.5 1V15M1 8.5H16M6 3.5L8.5 1L11 3.5M6 13.5L8.5 16L11 13.5M3.5 6L1 8.5L3.5 11M13.5 6L16 8.5L13.5 11" fill="none" stroke="#fff" stroke-width="1" transform="translate(1 1)"/><path shape-rendering="auto" d="M8.5 1V15M1 8.5H16M6 3.5L8.5 1L11 3.5M6 13.5L8.5 16L11 13.5M3.5 6L1 8.5L3.5 11M13.5 6L16 8.5L13.5 11" fill="none" stroke="#808080" stroke-width="1"/></g>
<g transform="translate(886 495)" shape-rendering="crispEdges"><path shape-rendering="auto" d="M8.5 1V15M1 8.5H16M6.5 4L8.5 6L10.5 4M6.5 13L8.5 11L10.5 13M4 6.5L6 8.5L4 10.5M13 6.5L11 8.5L13 10.5" fill="none" stroke="#fff" stroke-width="1" transform="translate(1 1)"/><path shape-rendering="auto" d="M8.5 1V15M1 8.5H16M6.5 4L8.5 6L10.5 4M6.5 13L8.5 11L10.5 13M4 6.5L6 8.5L4 10.5M13 6.5L11 8.5L13 10.5" fill="none" stroke="#808080" stroke-width="1"/></g>
<g transform="translate(886 518)" shape-rendering="crispEdges"><text x="1" y="9" font-weight="bold" style="font-family:'DejaVu Sans','Liberation Sans',sans-serif;font-size:10px" fill="#fff" textLength="6" lengthAdjust="spacingAndGlyphs">S</text><text x="0" y="8" font-weight="bold" style="font-family:'DejaVu Sans','Liberation Sans',sans-serif;font-size:10px" fill="#808080" textLength="6" lengthAdjust="spacingAndGlyphs" stroke="#808080" stroke-width=".35">S</text><text x="6" y="16" font-weight="bold" style="font-family:'DejaVu Sans','Liberation Sans',sans-serif;font-size:10px" fill="#fff" textLength="12" lengthAdjust="spacingAndGlyphs">TC</text><text x="5" y="15" font-weight="bold" style="font-family:'DejaVu Sans','Liberation Sans',sans-serif;font-size:10px" fill="#808080" textLength="12" lengthAdjust="spacingAndGlyphs" stroke="#808080" stroke-width=".35">TC</text></g>
<g transform="translate(886 547)" shape-rendering="crispEdges"><path shape-rendering="auto" d="M3.5 1V15M1 4L3.5 1L6 4M1 12L3.5 15L6 12" fill="none" stroke="#fff" stroke-width="1" transform="translate(1 1)"/><path shape-rendering="auto" d="M3.5 1V15M1 4L3.5 1L6 4M1 12L3.5 15L6 12" fill="none" stroke="#808080" stroke-width="1"/><text x="7" y="15" font-weight="bold" style="font-family:'Noto Sans CJK JP','IPAGothic',sans-serif;font-size:12px" fill="#fff" textLength="11" lengthAdjust="spacingAndGlyphs">柴</text><text x="6" y="14" font-weight="bold" style="font-family:'Noto Sans CJK JP','IPAGothic',sans-serif;font-size:12px" fill="#808080" textLength="11" lengthAdjust="spacingAndGlyphs" stroke="#808080" stroke-width=".35">柴</text></g>
<g transform="translate(0 0)" shape-rendering="crispEdges"><path d="M6 5H18L21 8V14L18 17H6V13H9V9H6Z" fill="#000"/><path d="M6 6H17Q20 6 20 9V13Q20 16 17 16H6V14H16Q17 14 17 13V9Q17 8 16 8H6Z" fill="#80ffff" shape-rendering="auto"/><rect x="11" y="8" width="2" height="6" fill="#000"/><rect x="9" y="8" width="2" height="6" fill="#70f070"/><rect x="12" y="9" width="4" height="4" fill="#000080"/><rect x="9" y="16" width="13" height="5" fill="#000"/><rect x="10" y="17" width="5" height="4" fill="#ff70ff"/><path d="M10 18.5h5M11.5 17v4M13.5 17v4" stroke="#c040c0" fill="none"/><rect x="17" y="17" width="1" height="4" fill="#ffff60"/><rect x="19" y="17" width="1" height="4" fill="#ffff60"/><rect x="18" y="18" width="1" height="2" fill="#ffff60"/></g>
<g transform="translate(0 0)" shape-rendering="crispEdges"><rect x="12" y="74" width="11" height="11" rx="1.5" fill="#000" shape-rendering="auto"/><rect x="13" y="75" width="9" height="9" fill="#fff"/><rect x="14" y="76" width="7" height="7" fill="#000"/><rect x="15" y="77" width="5" height="5" fill="#fff"/><path d="M16 80l3-3" stroke="#808080"/><rect x="17" y="79" width="11" height="11" rx="1.5" fill="#000" shape-rendering="auto"/><rect x="18" y="80" width="9" height="9" fill="#fff"/><rect x="19" y="81" width="7" height="7" fill="#000"/><rect x="20" y="82" width="5" height="5" fill="#fff"/><path d="M20.5 82v5M22.5 82l2 5M24.5 82l-2 5" stroke="#808080" fill="none"/></g>
<g transform="translate(0 0)" shape-rendering="crispEdges"><path d="M12.5 415.5H14.5V414.5H17.5L19.5 416.5L21.5 414.5H24.5V415.5H26.5V424.5H22.5L20.5 426.5H18.5L16.5 424.5H12.5Z" fill="#fff" stroke="#000"/><path d="M14.5 415V422.5H16.5L18.5 424.5M24.5 415V422.5H22.5L20.5 424.5M19.5 416.5V426" fill="none" stroke="#000"/><path d="M16.5 417l1 3M22.5 417l-1 3" stroke="#808080" fill="none"/><rect x="15" y="420" width="1" height="1" fill="#f00"/></g>
<g transform="translate(0 0)" shape-rendering="crispEdges"><g shape-rendering="auto"><path d="M461 89.5L461.5 87L471.5 75L475.5 74.5L475.5 82.5L473 85.5L466 89Z" fill="#00ee00" stroke="#000" stroke-width="1.2"/><path d="M466 81L471 86.5M468.5 78L474 84M464 84L468 88" stroke="#000" fill="none"/><path d="M472.5 76.5L469.5 80M468 82.5L470.5 85M465.5 85.5L467 87M474.5 76L473 78" stroke="#fff" stroke-width="1.4" fill="none"/><path d="M466 90.5h4" stroke="#00ee00"/></g></g>
<g shape-rendering="auto"><path d="M895.5 745L907 733.5M899.5 745L907 737.5M903.5 745L907 741.5" stroke="#fff" fill="none"/><path d="M896.5 745L907 734.5M897.5 745L907 735.5M900.5 745L907 738.5M901.5 745L907 739.5M904.5 745L907 742.5" stroke="#808080" fill="none"/></g>
<text x="24" y="17" textLength="413" lengthAdjust="spacingAndGlyphs" style="font-size:13px" fill="#fff">断面計算Ⅲ-N V3.10★CopyRight: ㈱テクノオブジェ★平面骨組Ⅳ版、残358日★0-0</text>
<text x="11" y="36" textLength="43" lengthAdjust="spacingAndGlyphs" style="font-size:13px" fill="#000">ファイル(F)</text>
<text x="68" y="36" textLength="40" lengthAdjust="spacingAndGlyphs" style="font-size:13px" fill="#000">表示(V)</text>
<text x="121" y="36" textLength="64" lengthAdjust="spacingAndGlyphs" style="font-size:13px" fill="#000">断面選択(S)</text>
<text x="199" y="36" textLength="44" lengthAdjust="spacingAndGlyphs" style="font-size:13px" fill="#000">頁･行(P)</text>
<text x="257" y="36" textLength="40" lengthAdjust="spacingAndGlyphs" style="font-size:13px" fill="#000">編集(E)</text>
<text x="310" y="36" textLength="44" lengthAdjust="spacingAndGlyphs" style="font-size:13px" fill="#000">データ(D)</text>
<text x="368" y="36" textLength="64" lengthAdjust="spacingAndGlyphs" style="font-size:13px" fill="#000">断面計算(C)</text>
<text x="446" y="36" textLength="50" lengthAdjust="spacingAndGlyphs" style="font-size:13px" fill="#000">IDX DF(I)</text>
<text x="509" y="36" textLength="88" lengthAdjust="spacingAndGlyphs" style="font-size:13px" fill="#000">結果CSV書込(W)</text>
<text x="31" y="86" textLength="179" lengthAdjust="spacingAndGlyphs" style="font-size:13px" fill="#fff">JIS 準拠断面定義◆R付き<tspan style="font-family:'Noto Sans CJK JP',sans-serif">Ｉ</tspan>形断面</text>
<text x="160" y="124" textLength="95" lengthAdjust="spacingAndGlyphs" style="font-size:17px" fill="#fff">JIS 準拠断面</text>
<text x="29" y="424" textLength="213" lengthAdjust="spacingAndGlyphs" style="font-size:13px" fill="#c0c0c0">◆入力ガイダンス◆選択断面タイプに対応◆</text>
<text x="478" y="86" textLength="138" lengthAdjust="spacingAndGlyphs" style="font-size:13px" fill="#c0c0c0">R付き<tspan style="font-family:'Noto Sans CJK JP',sans-serif">Ｉ</tspan>形断面 作画倍数=1</text>
<text x="24" y="159" textLength="96" lengthAdjust="spacing" class="m" fill="#fff">断面タイプ選択</text>
<text x="45" y="188" textLength="52" lengthAdjust="spacing" class="m" fill="#fff">JIS 要目</text>
<text x="38" y="249" textLength="66" lengthAdjust="spacing" class="m" fill="#fff">計算用要目</text>
<text x="48" y="346" textLength="51" lengthAdjust="spacing" class="m" fill="#fff">コメント</text>
<text x="129" y="158" textLength="81" lengthAdjust="spacingAndGlyphs" style="font-size:13px" fill="#000">R付き<tspan style="font-family:'Noto Sans CJK JP',sans-serif">Ｉ</tspan>形断面</text>
<text x="135" y="186" textLength="8" lengthAdjust="spacingAndGlyphs" fill="#000">H</text>
<text x="150" y="186" textLength="7" lengthAdjust="spacingAndGlyphs" fill="#000">*</text>
<text x="166" y="186" textLength="8" lengthAdjust="spacingAndGlyphs" fill="#000">B</text>
<text x="181" y="186" textLength="7" lengthAdjust="spacingAndGlyphs" fill="#000">*</text>
<text x="197" y="186" textLength="9" lengthAdjust="spacingAndGlyphs" fill="#000">t1</text>
<text x="213" y="186" textLength="7" lengthAdjust="spacingAndGlyphs" fill="#000">*</text>
<text x="227" y="186" textLength="10" lengthAdjust="spacingAndGlyphs" fill="#000">t2</text>
<text x="247" y="186" textLength="7" lengthAdjust="spacingAndGlyphs" fill="#000">*</text>
<text x="262" y="186" textLength="10" lengthAdjust="spacingAndGlyphs" fill="#000">r1</text>
<text x="282" y="186" textLength="7" lengthAdjust="spacingAndGlyphs" fill="#000">*</text>
<text x="296" y="186" textLength="10" lengthAdjust="spacingAndGlyphs" fill="#000">r2</text>
<text x="137" y="214" textLength="20" lengthAdjust="spacingAndGlyphs" fill="#000">300</text>
<text x="170" y="214" textLength="20" lengthAdjust="spacingAndGlyphs" fill="#000">150</text>
<text x="199" y="214" textLength="23" lengthAdjust="spacingAndGlyphs" fill="#000">11.5</text>
<text x="239" y="214" textLength="13" lengthAdjust="spacingAndGlyphs" fill="#000">22</text>
<text x="269" y="214" textLength="13" lengthAdjust="spacingAndGlyphs" fill="#000">23</text>
<text x="292" y="214" textLength="23" lengthAdjust="spacingAndGlyphs" fill="#000">11.5</text>
<text x="135" y="250" textLength="19" lengthAdjust="spacing" style="font-size:15px" class="m" fill="#000">mm</text>
<text x="67.75" y="276" textLength="6.5" lengthAdjust="spacingAndGlyphs" fill="#000">A</text>
<text x="135" y="275" textLength="20" lengthAdjust="spacingAndGlyphs" fill="#fff">300</text>
<text x="191.75" y="277" textLength="6.5" lengthAdjust="spacingAndGlyphs" fill="#000">B</text>
<text x="261" y="277" textLength="20" lengthAdjust="spacingAndGlyphs" fill="#000">150</text>
<text x="316.0" y="277" textLength="10" lengthAdjust="spacingAndGlyphs" fill="#000">t1</text>
<text x="384" y="274" textLength="23" lengthAdjust="spacingAndGlyphs" fill="#000">11.5</text>
<text x="66.0" y="303" textLength="10" lengthAdjust="spacingAndGlyphs" fill="#000">t2</text>
<text x="142" y="301" textLength="13" lengthAdjust="spacingAndGlyphs" fill="#000">22</text>
<text x="190.0" y="305" textLength="10" lengthAdjust="spacingAndGlyphs" fill="#000">r1</text>
<text x="268" y="303" textLength="13" lengthAdjust="spacingAndGlyphs" fill="#000">23</text>
<text x="316.0" y="303" textLength="10" lengthAdjust="spacingAndGlyphs" fill="#000">r2</text>
<text x="384" y="300" textLength="23" lengthAdjust="spacingAndGlyphs" fill="#000">11.5</text>
<text x="130" y="344" textLength="252" lengthAdjust="spacing" class="m" fill="#000">入力データから線積分データを生成して計算。</text>
<g shape-rendering="crispEdges"><path d="M592.9 404.5L727.1 404.5L727.1 410.9A10.3 10.3 0 0 1 718.2 421.1L683.1 426.0A20.6 20.6 0 0 0 665.4 446.4L665.4 630.6A20.6 20.6 0 0 0 683.1 651.0L718.2 655.9A10.3 10.3 0 0 1 727.1 666.1L727.1 672.5L592.9 672.5L592.9 666.1A10.3 10.3 0 0 1 601.8 655.9L636.9 651.0A20.6 20.6 0 0 0 654.6 630.6L654.6 446.4A20.6 20.6 0 0 0 636.9 426.0L601.8 421.1A10.3 10.3 0 0 1 592.9 410.9Z" fill="none" stroke="#000" stroke-width="1"/><path d="M578 404.5H594M728 404.5H743M578 672.5H594M728 672.5H743" stroke="#0080c0" stroke-dasharray="3 3" fill="none"/><path d="M660.5 380V698" stroke="#0080c0" stroke-dasharray="3 3" fill="none"/><path d="M659.5 377V694" stroke="#f00" stroke-dasharray="9 4 3 4" fill="none"/><path d="M578 537.5H736" stroke="#f00" stroke-dasharray="9 4 3 4" fill="none"/><path d="M473.5 683V699.5H491" stroke="#00f" fill="none"/><path d="M471.5 686v-1h1v-1h3v1h1v1z" fill="#00f"/><rect x="489" y="698" width="3" height="3" fill="#00f"/></g>
<text x="676" y="450" textLength="27" lengthAdjust="spacing" class="m" fill="#000">R=23</text>
<text x="706" y="648" textLength="40" lengthAdjust="spacing" class="m" fill="#000">R=11.5</text>
<text x="625" y="690" textLength="34" lengthAdjust="spacing" class="m" fill="#000">B=150</text>
<text x="668" y="690" textLength="26" lengthAdjust="spacing" class="m" fill="#000">T=22</text>
<text x="727" y="535" textLength="25" lengthAdjust="spacing" class="m" fill="#f00">N.A.</text>
<text x="0" y="0" textLength="40" lengthAdjust="spacing" class="m" fill="#000" transform="translate(648 537) rotate(-90)">T=11.5</text>
<text x="0" y="0" textLength="33" lengthAdjust="spacing" class="m" fill="#000" transform="translate(648 580) rotate(-90)">H=300</text>
<text x="473" y="680" textLength="5" lengthAdjust="spacing" style="font-size:11px" class="m" fill="#00f">z</text>
<text x="497" y="696" textLength="5" lengthAdjust="spacing" style="font-size:11px" class="m" fill="#00f">y</text>
<text x="588" y="409" textLength="13" lengthAdjust="spacing" class="m" fill="#f0f">10</text>
<text x="725" y="409" textLength="6" lengthAdjust="spacing" class="m" fill="#f0f">9</text>
<text x="594" y="422" textLength="13" lengthAdjust="spacing" class="m" fill="#f0f">11</text>
<text x="618" y="428" textLength="13" lengthAdjust="spacing" class="m" fill="#f0f">12</text>
<text x="648" y="436" textLength="13" lengthAdjust="spacing" class="m" fill="#f0f">13</text>
<text x="668" y="436" textLength="6" lengthAdjust="spacing" class="m" fill="#f0f">6</text>
<text x="694" y="428" textLength="6" lengthAdjust="spacing" class="m" fill="#f0f">7</text>
<text x="722" y="422" textLength="6" lengthAdjust="spacing" class="m" fill="#f0f">8</text>
<text x="721" y="663" textLength="6" lengthAdjust="spacing" class="m" fill="#f0f">3</text>
<text x="724" y="677" textLength="6" lengthAdjust="spacing" class="m" fill="#f0f">2</text>
<text x="694" y="657" textLength="6" lengthAdjust="spacing" class="m" fill="#f0f">4</text>
<text x="668" y="647" textLength="6" lengthAdjust="spacing" class="m" fill="#f0f">5</text>
<text x="648" y="647" textLength="13" lengthAdjust="spacing" class="m" fill="#f0f">14</text>
<text x="618" y="657" textLength="13" lengthAdjust="spacing" class="m" fill="#f0f">15</text>
<text x="594" y="663" textLength="13" lengthAdjust="spacing" class="m" fill="#f0f">16</text>
<text x="588" y="677" textLength="13" lengthAdjust="spacing" class="m" fill="#f0f">17</text>
<path d="M660.5 666v8" stroke="#f0f" fill="none" shape-rendering="crispEdges"/>
<text x="825" y="740" textLength="24" lengthAdjust="spacingAndGlyphs" style="font-size:13px" fill="#000">NUM</text>
<text x="6.5" y="741" textLength="21" lengthAdjust="spacingAndGlyphs" style="font-size:13px" fill="#000">ﾚﾃﾞｨ</text>
</svg>
</body></html>
